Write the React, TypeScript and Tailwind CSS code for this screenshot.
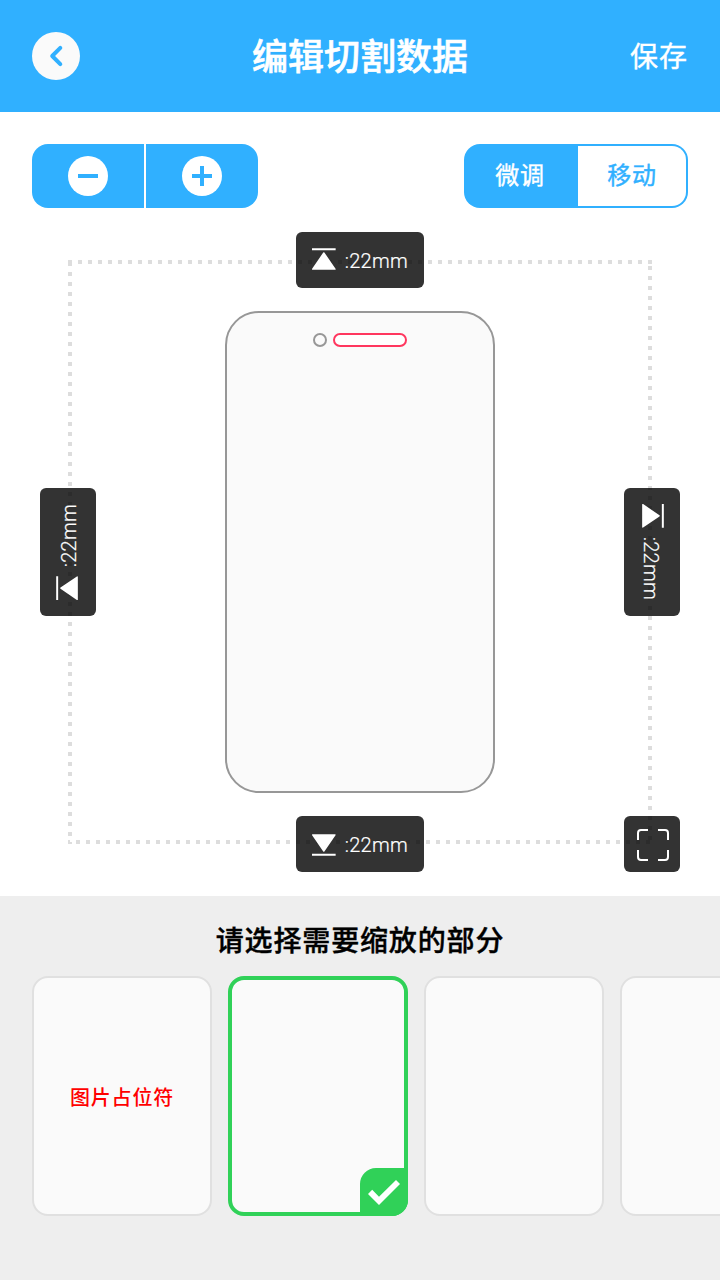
const Back = () => (
  <svg width="48" height="48" viewBox="0 0 48 48" fill="none">
    <circle cx="24" cy="24" r="24" fill="#fafafa" />
    <path d="M28.3 15.9 20.2 24l8.1 8.1" stroke="#30b0ff" strokeWidth="4" strokeLinecap="round" strokeLinejoin="round" />
  </svg>
);

const ArrowIcon = () => (
  <svg width="24" height="24" viewBox="0 0 24 24" fill="#fff">
    <path d="M0 0h24v2H0zM11.4 4.4q.6-.7 1.2 0L23.9 21q.4 1-.5 1H.6q-.9 0-.5-1z" />
  </svg>
);

const DownIcon = () => (
  <svg width="24" height="24" viewBox="0 0 24 24" fill="#fff">
    <path d="M0 22h24v2H0zM11.4 19.6q.6.7 1.2 0L23.9 3q.4-1-.5-1H.6q-.9 0-.5 1z" />
  </svg>
);

const Label = ({ down = false, className = '' }: { down?: boolean; className?: string }) => (
  <div className={`flex h-14 w-32 items-center gap-2 rounded-md bg-black/80 px-4 text-white ${className}`}>
    {down ? <DownIcon /> : <ArrowIcon />}
    <span className="pt-0.5 pl-px font-['Roboto','Liberation_Sans',sans-serif] text-[20px] leading-7 font-light tracking-[0.3px] whitespace-nowrap [-webkit-text-stroke:0.2px_white]">
      :22mm
    </span>
  </div>
);

const Card = ({ children }: { children?: string }) => (
  <div className="flex h-60 w-45 shrink-0 items-center justify-center rounded-2xl border-2 border-[#e0e0e0] bg-[#fafafa] pt-0.5 text-[20px] tracking-[0.8px] text-[#ff0000]">
    {children}
  </div>
);

export default function App() {
  return (
    <div className="flex h-[1280px] w-[720px] flex-col overflow-hidden bg-white font-['Noto_Sans_CJK_SC',sans-serif] font-medium">
      <header className="flex h-28 shrink-0 items-center justify-between bg-[#30b0ff] px-8 text-white">
        <div className="flex flex-1">
          <Back />
        </div>
        <h1 className="pb-1 text-[36px] leading-[54px] font-medium [-webkit-text-stroke:0.6px_white]">编辑切割数据</h1>
        <button className="flex flex-1 justify-end pb-0.5 text-[28px] font-normal tracking-[1px] [-webkit-text-stroke:0.4px_white]">保存</button>
      </header>

      <main className="flex h-[784px] shrink-0 flex-col">
        <div className="flex items-center justify-between px-8 pt-8">
          <div className="flex h-16 gap-0.5 overflow-hidden rounded-2xl">
            <button className="flex w-28 items-center justify-center bg-[#30b0ff]">
              <svg width="40" height="40" viewBox="0 0 40 40">
                <circle cx="20" cy="20" r="20" fill="#fff" />
                <path d="M10 18h20v4H10z" fill="#30b0ff" />
              </svg>
            </button>
            <button className="flex w-28 items-center justify-center bg-[#30b0ff]">
              <svg width="40" height="40" viewBox="0 0 40 40">
                <circle cx="20" cy="20" r="20" fill="#fff" />
                <path d="M10 18h8v-8h4v8h8v4h-8v8h-4v-8h-8z" fill="#30b0ff" />
              </svg>
            </button>
          </div>
          <div className="flex h-16 w-56 rounded-2xl bg-[#30b0ff] p-0.5 text-[24px] font-normal tracking-[0.8px] [-webkit-text-stroke:0.4px_currentColor]">
            <button className="w-28 pr-1 pb-1 text-white">微调</button>
            <button className="flex-1 rounded-r-[14px] bg-white pb-1 text-[#30b0ff]">移动</button>
          </div>
        </div>

        <div className="relative h-[688px]">
          <svg className="absolute inset-0" width="720" height="688" viewBox="0 208 720 688" fill="none">
            <path d="M68 262h584" stroke="#ddd" strokeWidth="4" strokeDasharray="4 6" />
            <path d="M650 266v576" stroke="#ddd" strokeWidth="4" strokeDasharray="4 6" />
            <path d="M76 842h574" stroke="#ddd" strokeWidth="4" strokeDasharray="4 6" />
            <path d="M70 262v578" stroke="#ddd" strokeWidth="4" strokeDasharray="4 6" />
            <path d="M68 840h2v2h2v2h-4z" fill="#ddd" />
            <rect x="226" y="312" width="268" height="480" rx="33" fill="#fafafa" stroke="#979797" strokeWidth="2" />
            <circle cx="320" cy="340" r="6" stroke="#979797" strokeWidth="2" />
            <rect x="334" y="334" width="72" height="12" rx="6" fill="#fff" stroke="#ff375f" strokeWidth="2" />
          </svg>
          <Label className="absolute top-6 left-[296px]" />
          <Label down className="absolute top-[608px] left-[296px]" />
          <Label className="absolute top-[316px] left-1 -rotate-90" />
          <Label className="absolute top-[316px] left-[588px] rotate-90" />
          <button className="absolute top-[608px] left-[624px] flex size-14 items-center justify-center rounded-md bg-black/80">
            <svg width="56" height="56" viewBox="0 0 56 56" fill="none" stroke="#fff" strokeWidth="2">
              <path d="M14 24v-7q0-3 3-3h7M34 14h7q3 0 3 3v7M44 34v7q0 3-3 3h-7M24 44h-7q-3 0-3-3v-7" />
            </svg>
          </button>
        </div>
      </main>

      <section className="flex flex-1 flex-col bg-[#eee]">
        <h2 className="mt-[23px] text-center text-[28px] leading-10 tracking-[0.85px] text-black [-webkit-text-stroke:0.4px_black]">请选择需要缩放的部分</h2>
        <div className="mt-[17px] flex gap-4 pl-8">
          <Card>图片占位符</Card>
          <div className="flex h-60 w-45 shrink-0 items-end justify-end rounded-2xl border-4 border-[#30d158] bg-[#fafafa]">
            <div className="-mr-1 -mb-1 rounded-tl-2xl rounded-br-2xl bg-[#30d158]">
              <svg width="48" height="48" viewBox="0 0 48 48">
                <path d="m8 26 4.2-4.3 6.8 7L36 12l4 4-21 21z" fill="#fff" />
              </svg>
            </div>
          </div>
          <Card />
          <Card />
        </div>
      </section>
    </div>
  );
}
